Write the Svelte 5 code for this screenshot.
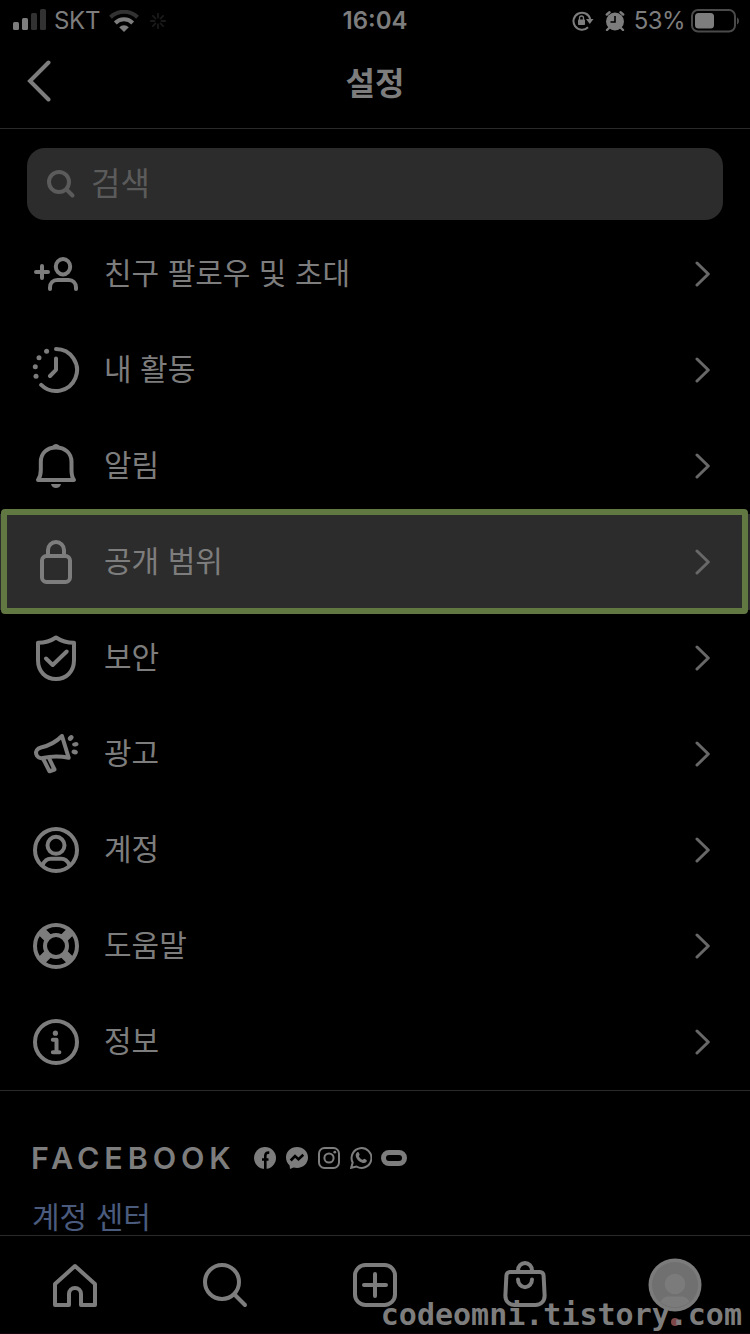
<script lang="ts">
  const rows = [
    { icon: 'invite', label: '친구 팔로우 및 초대' },
    { icon: 'activity', label: '내 활동' },
    { icon: 'bell', label: '알림' },
    { icon: 'lock', label: '공개 범위' },
    { icon: 'shield', label: '보안' },
    { icon: 'ads', label: '광고' },
    { icon: 'account', label: '계정' },
    { icon: 'help', label: '도움말' },
    { icon: 'info', label: '정보' },
  ]

  const tabs = ['home', 'search', 'create', 'shop', 'profile']
  const selected = 'lock'
  const spokes = [0, 45, 90, 135, 180, 225, 270, 315]
</script>

{#snippet icon(name: string)}
  <svg class="icon" viewBox="0 0 48 48" width="48" height="48">
    {#if name === 'invite'}
      <path d="M10 16v12M4 22h12" />
      <ellipse cx="31" cy="16.7" rx="7.2" ry="7.7" />
      <path d="M18 39v-1.5c0-4.3 3-7.5 7.3-7.5h11.4c4.3 0 7.3 3.2 7.3 7.5V39" />
    {:else if name === 'activity'}
      <path d="M24 3A21 21 0 1 1 9.2 38.9M24 12.5v11.3L18 30" />
      <g class="solid">
        <circle cx="14.6" cy="5.3" r="2.5" />
        <circle cx="7" cy="11.7" r="2.5" />
        <circle cx="3.3" cy="20.7" r="2.5" />
        <circle cx="4" cy="30.3" r="2.5" />
      </g>
    {:else if name === 'bell'}
      <path d="M6 38c2.3-3 2.8-6 2.8-10v-8C8.8 11 15 5.5 24 5.5S39.5 11 39.5 20v8c0 4 .2 7 2.5 10z" />
      <path class="solid" d="M18 6c2-.8 3-4 6-4s4 3.200 6 4zM19 42h10c-.5 2.600-2.500 4-5 4s-4.500-1.400-5-4z" />
    {:else if name === 'lock'}
      <rect x="10" y="18" width="28" height="26" rx="4.5" />
      <path d="M16 18v-6a8 8 0 0 1 16 0v6" />
    {:else if name === 'shield'}
      <path d="M24 3.5C18 7.5 12 8.8 6 8.8V26c0 12 8 19 18 19s18-7 18-19V8.800c-6 0-12-1.300-18-5.300z" />
      <path d="M14 24.500l6.700 6.500 14-13.500" />
    {:else if name === 'ads'}
      <path d="M30 6c-5.5 5.5-12 9.500-21 11.500-4 .9-5.500 3.700-4.800 6.500.7 3 3.500 4.700 6.500 4 9-2 17-2.200 26-.2z" />
      <path d="M11 28.500l6.500 12.800 5-1.800-1.500-3-4-8.500" />
      <g class="solid">
        <ellipse cx="38.7" cy="8" rx="3.2" ry="2.4" transform="rotate(-45 38.7 8)" />
        <ellipse cx="43.3" cy="14.3" rx="3.2" ry="2.2" transform="rotate(-10 43.3 14.3)" />
        <ellipse cx="42.7" cy="22" rx="3.2" ry="2.3" transform="rotate(15 42.7 22)" />
      </g>
    {:else if name === 'account'}
      <circle cx="24" cy="24" r="21" />
      <circle cx="24" cy="19.3" r="8.5" />
      <path d="M10.5 39c2-4 4.5-6.2 8-6.2h11c3.5 0 6 2.200 8 6.200" />
    {:else if name === 'help'}
      <circle cx="24" cy="24" r="21" />
      <circle cx="24" cy="24" r="11" />
      <path class="thick" d="M16 16l-6-6M32 16l6-6M16 32l-6 6M32 32l6 6" />
    {:else if name === 'info'}
      <circle cx="24" cy="24" r="21" />
      <circle class="solid" cx="23.4" cy="15.2" r="2.6" />
      <path d="M20.800 21.800h3.700v12.500M20.800 34.300h6.600" />
    {:else if name === 'home'}
      <path d="M24 5l20 18v21H30V33a6 6 0 0 0-12 0v11H4V23z" />
    {:else if name === 'search'}
      <circle cx="21" cy="21" r="17" />
      <path d="M33.500 33.500L44 44" />
    {:else if name === 'create'}
      <rect x="4" y="4" width="40" height="40" rx="10.5" />
      <path d="M24 13v22M13 24h22" />
    {:else if name === 'shop'}
      <path d="M9 11h30c2 0 3.500 1.500 3.600 3.500l1 19.500c.3 6-3.700 10-9.200 10H13.600c-5.500 0-9.500-4-9.200-10l1-19.500C5.500 12.500 7 11 9 11z" />
      <path d="M17 11V9.500a7 7.500 0 0 1 14 0V11M17 18.500a7 7.700 0 0 0 14 0" />
    {/if}
  </svg>
{/snippet}

<div class="screen">
  <div class="status">
    <div class="side">
      <svg class="signal" viewBox="0 0 34 22" width="34" height="22">
        <rect x="0" y="13" width="6" height="8" rx="1.5" />
        <rect x="9" y="9" width="6" height="12" rx="1.5" />
        <rect class="off" x="18" y="4" width="6" height="17" rx="1.5" />
        <rect class="off" x="27" y="0" width="6" height="21" rx="1.5" />
      </svg>
      <span class="carrier">SKT</span>
      <svg class="wifi" viewBox="0 0 30 22" width="30" height="22">
        <path class="off" d="M1.500 7.200a19.500 19.500 0 0 1 27 0" />
        <path d="M6.300 13a12.200 12.200 0 0 1 17.400 0" />
        <path class="fill" d="M15 22l-4.800-4.800a7 7 0 0 1 9.600 0z" />
      </svg>
      <svg class="spinner" viewBox="-8 -8 16 16" width="16" height="16">
        {#each spokes as a}
          <path d="M0-7.200V-3.500" transform="rotate({a})" />
        {/each}
      </svg>
    </div>
    <span class="time">16:04</span>
    <div class="side right">
      <svg class="rotation" viewBox="0 0 22 20" width="22" height="20">
        <path class="ring" d="M18.200 8A8.500 8.500 0 1 0 16 16.200" />
        <path d="M14 8h7.500l-3.700 5z" />
        <rect x="6" y="8.500" width="7" height="5.500" rx=".7" />
        <path class="shackle" d="M7.500 9V7a2 2 0 0 1 4 0v2" />
      </svg>
      <svg class="alarm" viewBox="0 0 20 20" width="20" height="20">
        <circle cx="10" cy="10.5" r="9" />
        <path class="bar" d="M1.800 3.500L4.500 1.300M18.200 3.500L15.500 1.300M4 17l-2 2M16 17l2 2" />
        <path class="hand" d="M10 5v6H5.500" />
      </svg>
      <span class="percent">53%</span>
      <svg class="battery" viewBox="0 0 49 24" width="49" height="24">
        <rect class="shell" x="1" y="1" width="43" height="21.5" rx="6" />
        <rect x="4" y="4" width="19" height="15.5" rx="3.5" />
        <path class="shell-fill" d="M46 8.500c2.700 1.200 2.700 5.800 0 7z" />
      </svg>
    </div>
  </div>

  <header>
    <svg class="back" viewBox="0 0 24 42" width="24" height="42">
      <path d="M21.500 2.500L3 21l18.500 18.500" />
    </svg>
    <h1>설정</h1>
  </header>

  <div class="searchbox">
    <svg viewBox="0 0 30 30" width="30" height="30">
      <circle cx="13" cy="13" r="10" />
      <path d="M20.500 20.500l6 6" />
    </svg>
    <span>검색</span>
  </div>

  <ul>
    {#each rows as row}
      <li class:selected={row.icon === selected}>
        {@render icon(row.icon)}
        <span class="label">{row.label}</span>
        <svg class="chevron" viewBox="0 0 16 28" width="16" height="28">
          <path d="M2 3l11.300 11L2 25" />
        </svg>
      </li>
    {/each}
  </ul>

  <section>
    <div class="brand">
      <span class="wordmark">FACEBOOK</span>
      <svg viewBox="0 0 22 22" width="22" height="22">
        <circle cx="11" cy="11" r="11" />
        <path class="cut" d="M11.300 22v-9.500M8 12.500h6.500M11.300 13V9c0-2.500 1.200-3.600 4-3.300" />
      </svg>
      <svg viewBox="0 0 22 22" width="22" height="22">
        <path d="M11 0C4.800 0 0 4.500 0 10.500c0 3.200 1.400 6 3.600 7.900L4 22l3.500-1.600c1.100.3 2.300.5 3.500.5 6.200 0 11-4.500 11-10.400S17.200 0 11 0z" />
        <path class="cut" d="M4.700 13.500L9 9l3.500 3.200 4.800-4.400" />
      </svg>
      <svg class="outline" viewBox="0 0 22 22" width="22" height="22">
        <rect x="1" y="1" width="20" height="20" rx="5.5" />
        <circle cx="11" cy="11" r="4.6" />
        <circle class="dot" cx="16.8" cy="5.2" r="1.4" />
      </svg>
      <svg class="outline" viewBox="0 0 22 22" width="22" height="22">
        <path d="M1.200 20.800l1.500-5.300A9.900 9.900 0 1 1 6.500 19.500z" />
        <path class="dot" d="M7.200 5.300c.8-.5 1.400-.2 1.700.5l.7 1.800c.2.600-.9 1.400-.7 1.900.8 1.600 2 2.700 3.600 3.300.6.200 1.200-1.200 1.800-1l2 .9c.8.500.5 1.600 0 2.300-1 1.200-2.600 1.300-4.100.8-3.200-1.100-5.300-3.200-6.300-6-.5-1.700-.1-3.500 1.300-4.500z" />
      </svg>
      <svg class="oval" viewBox="0 0 26 16" width="26" height="16">
        <rect x="2.5" y="2.5" width="21" height="11" rx="5.5" />
      </svg>
    </div>
    <a class="center-link" href="#accounts">계정 센터</a>
  </section>

  <nav>
    {#each tabs as tab}
      <div class="tab">
        {#if tab === 'profile'}
          <svg class="avatar" viewBox="0 0 54 54" width="54" height="54">
            <circle class="rim" cx="27" cy="27" r="26.5" />
            <circle class="back-fill" cx="27" cy="27" r="23" />
            <circle class="rim" cx="27" cy="26" r="10.3" />
            <path class="rim" d="M12.500 44c2-4 4.500-5.500 8-5.500h13c3.500 0 6 1.500 8 5.500a23 23 0 0 1-29 0z" />
          </svg>
          <i class="badge"></i>
        {:else}
          {@render icon(tab)}
        {/if}
      </div>
    {/each}
    <span class="watermark">codeomni.tistory.com</span>
  </nav>
</div>

<style>
  :global(body) {
    margin: 0;
    background: #000;
  }

  .screen {
    --fg: #7d7d7d;
    --dim: #323232;
    --line: #2a2a2b;
    width: 750px;
    height: 1334px;
    display: flex;
    flex-direction: column;
    overflow: hidden;
    background: #000;
    color: var(--fg);
    font-family: Inter, 'Noto Sans CJK KR', sans-serif;
  }

  svg {
    display: block;
    flex: none;
    fill: var(--fg);
  }

  .status {
    display: grid;
    grid-template-columns: 1fr auto 1fr;
    align-items: center;
    height: 40px;
    padding: 0 10px 0 13px;
    font-size: 24px;
    line-height: 40px;
  }

  .side {
    display: flex;
    align-items: center;
  }

  .right {
    justify-content: flex-end;
  }

  .off {
    fill: var(--dim);
  }

  .signal {
    margin-top: -1px;
  }

  .carrier {
    width: 46px;
    margin: 1px 9px 0 7px;
    letter-spacing: -0.3px;
  }

  .wifi path {
    fill: none;
    stroke: var(--fg);
    stroke-width: 4;
  }

  .wifi .off {
    stroke: var(--dim);
  }

  .wifi .fill {
    fill: var(--fg);
    stroke: none;
  }

  .spinner {
    margin-left: 11px;
    stroke: #1a1a1a;
    stroke-width: 1.8;
    stroke-linecap: round;
  }

  .time {
    margin: 1px 3px 0 0;
    font-weight: 600;
  }

  .ring,
  .shackle {
    fill: none;
    stroke: var(--fg);
    stroke-width: 2;
  }

  .shackle {
    stroke-width: 1.3;
  }

  .alarm {
    margin-left: 11px;
  }

  .bar {
    stroke: var(--fg);
    stroke-width: 2.4;
    stroke-linecap: round;
  }

  .hand {
    fill: none;
    stroke: #000;
    stroke-width: 1.6;
  }

  .percent {
    margin: 1px 6px 0 9px;
    letter-spacing: -0.6px;
  }

  .shell {
    fill: none;
    stroke: #4a4a4a;
    stroke-width: 2;
  }

  .shell-fill {
    fill: #4a4a4a;
  }

  header {
    display: grid;
    grid-template-columns: 24px 1fr 24px;
    align-items: center;
    height: 89px;
    padding: 0 27px;
    box-sizing: border-box;
    border-bottom: 1px solid var(--line);
  }

  .back {
    margin-top: -6px;
    fill: none;
    stroke: var(--fg);
    stroke-width: 4;
    stroke-linecap: round;
  }

  h1 {
    margin: 0;
    font-size: 32px;
    line-height: 40px;
    font-weight: 700;
    text-align: center;
  }

  .searchbox {
    display: flex;
    align-items: center;
    gap: 15px;
    height: 72px;
    margin: 19px 27px 6px;
    padding-left: 19px;
    border-radius: 18px;
    background: #2c2c2c;
    color: #5b5b5b;
    font-size: 32px;
    line-height: 40px;
  }

  .searchbox svg {
    fill: none;
    stroke: #5b5b5b;
    stroke-width: 4;
    stroke-linecap: round;
  }

  ul {
    flex: none;
    margin: 0;
    padding: 0;
    list-style: none;
    border-bottom: 1px solid var(--line);
  }

  li {
    position: relative;
    display: flex;
    align-items: center;
    height: 96px;
    padding: 0 39px 0 32px;
  }

  .selected {
    background: #2c2c2c;
  }

  .selected::after {
    content: '';
    position: absolute;
    inset: -5px 2px -4px 1px;
    border: 6px solid #627843;
    border-radius: 4px;
  }

  .icon {
    fill: none;
    stroke: var(--fg);
    stroke-width: 4;
    stroke-linecap: round;
    stroke-linejoin: round;
  }

  .solid {
    fill: var(--fg);
    stroke: none;
  }

  .thick {
    stroke-width: 9;
    stroke-linecap: butt;
  }

  .label {
    flex: 1;
    margin: 0 0 2px 24px;
    font-size: 30px;
    line-height: 40px;
  }

  .chevron {
    fill: none;
    stroke: #686868;
    stroke-width: 3;
    stroke-linecap: round;
    stroke-linejoin: round;
  }

  section {
    flex: 1;
    min-height: 0;
    padding: 52px 32px 0;
  }

  .brand {
    display: flex;
    align-items: center;
    gap: 10px;
    height: 30px;
  }

  .wordmark {
    width: 213px;
    margin-left: -1px;
    font-size: 30.5px;
    line-height: 30px;
    font-weight: 600;
    letter-spacing: 4.9px;
    white-space: nowrap;
  }

  .cut {
    fill: none;
    stroke: #000;
    stroke-width: 2.6;
  }

  .outline,
  .oval {
    fill: none;
    stroke: var(--fg);
    stroke-width: 2;
  }

  .oval {
    margin-left: -1px;
    stroke-width: 5;
  }

  .dot {
    fill: var(--fg);
    stroke: none;
  }

  .center-link {
    display: block;
    margin-top: 24px;
    color: #4a5b7d;
    font-size: 30px;
    line-height: 40px;
    text-decoration: none;
  }

  nav {
    position: relative;
    display: grid;
    grid-template-columns: repeat(5, 1fr);
    justify-items: center;
    height: 97px;
    border-top: 1px solid var(--line);
    border-bottom: 1px solid #12020a;
    background: #000;
  }

  .tab {
    position: relative;
    padding-top: 25px;
  }

  .avatar {
    margin-top: -3px;
  }

  .rim {
    fill: #7b7b7b;
  }

  .back-fill {
    fill: #707070;
  }

  .badge {
    position: absolute;
    left: 23px;
    bottom: 7px;
    width: 8px;
    height: 8px;
    border-radius: 50%;
    background: #7d4747;
  }

  .watermark {
    position: absolute;
    right: 8px;
    bottom: 0;
    font: bold 30px/36px 'DejaVu Sans Mono', monospace;
  }
</style>
